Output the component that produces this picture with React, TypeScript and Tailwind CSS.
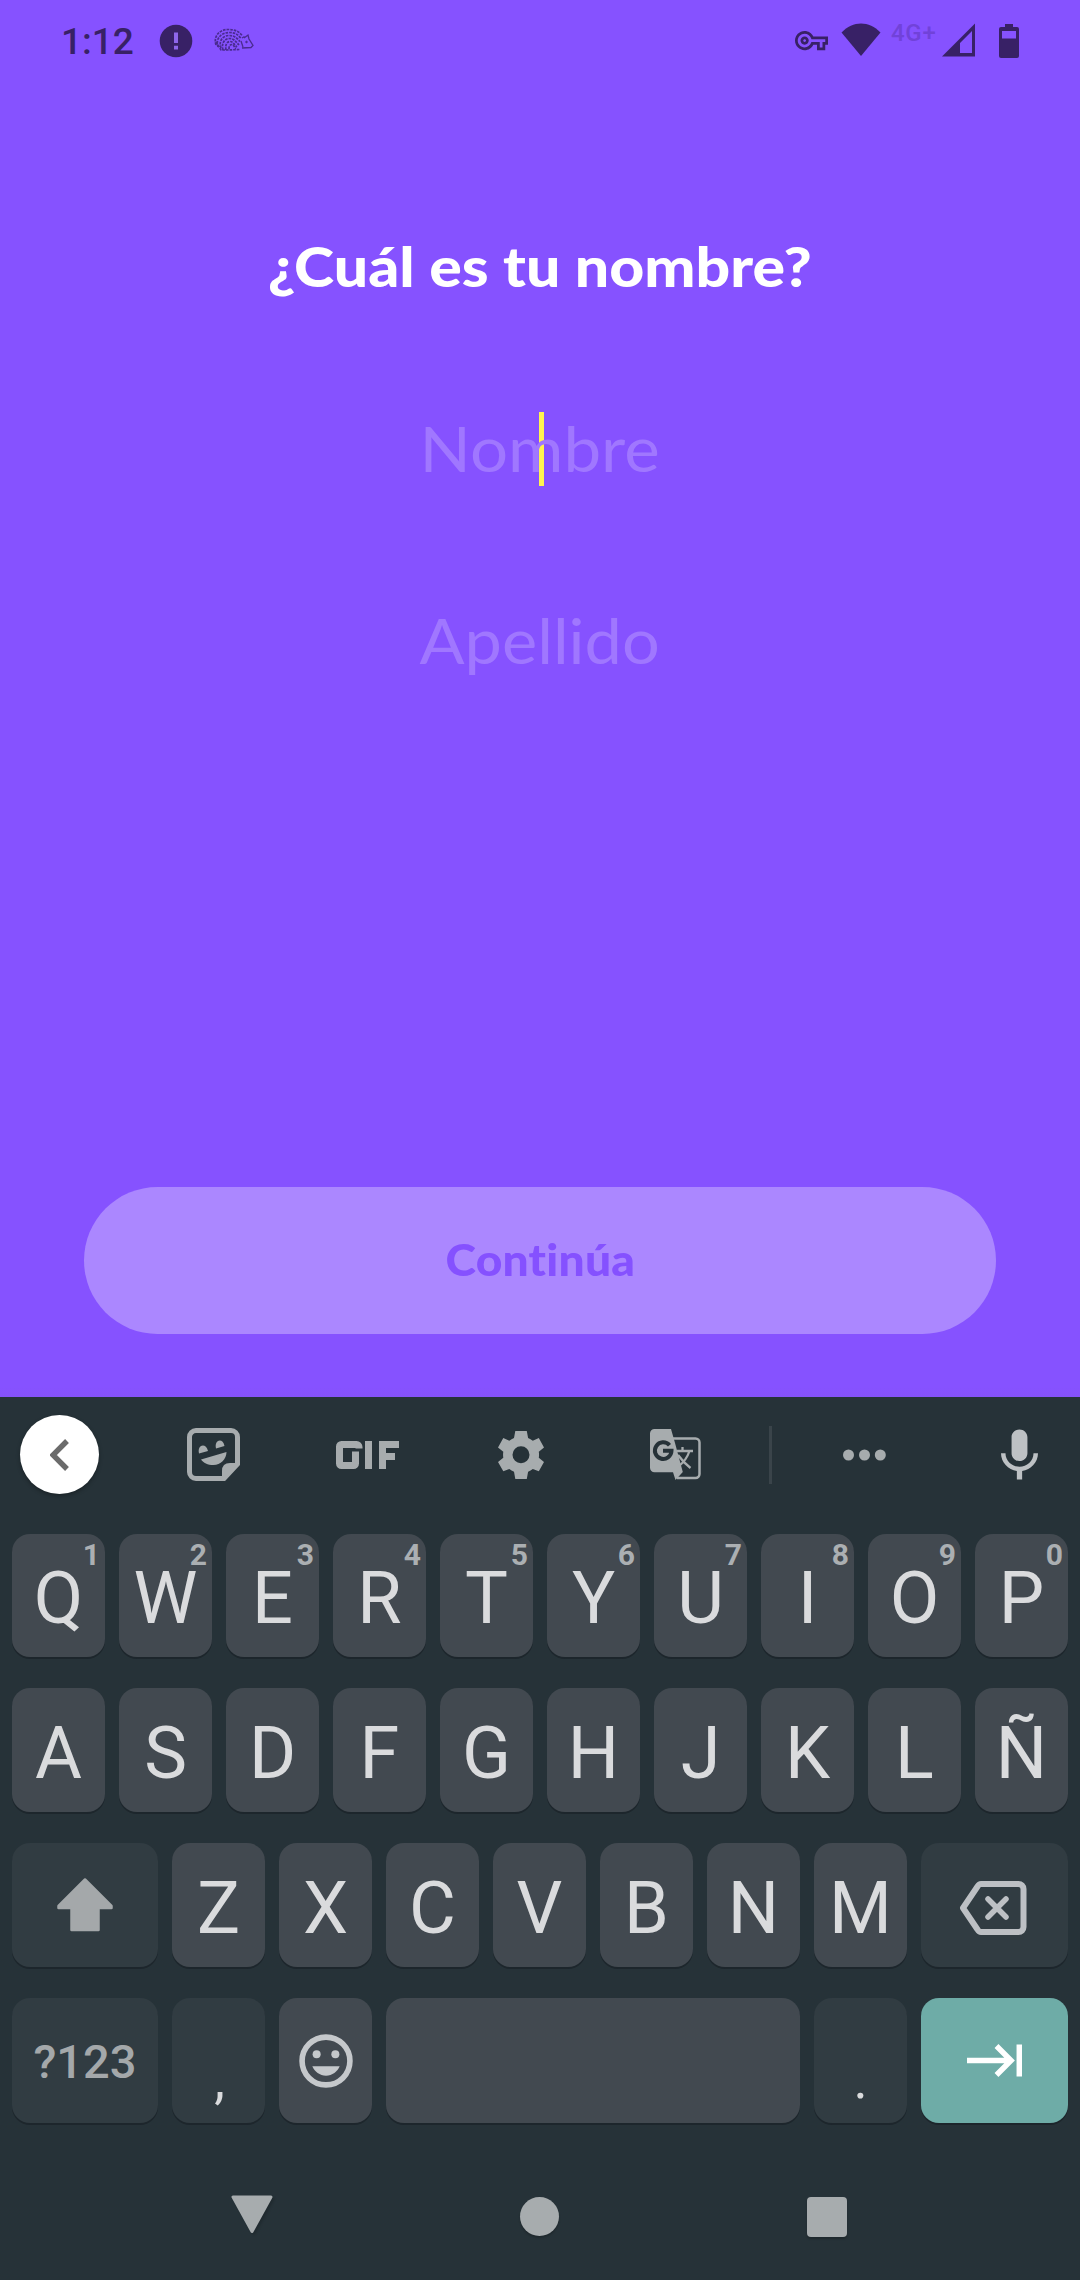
import React from "react";
import { MdOutlineVpnKey } from "react-icons/md";

const Hedgehog = () => (
  <svg width="40" height="26" viewBox="0 0 40 26" fill="none" stroke="#4a2b90">
    <g strokeWidth="1.700" strokeDasharray="2.600 1">
      <path d="M2 17C-1 8 6 1.500 14 1.500c7 0 11 2 14 6" />
      <path d="M4 19C1 10 8 4.500 15 4.500c6 0 9 2 12 6" />
      <path d="M7 20C4 12 10 7.500 15 7.500c6 0 8 3 11 6" />
      <path d="M9 22c-2-7 2-11.500 6.500-11.500s6 3 9.500 6.500" />
      <path d="M12 22c-1-5 1-8.500 4-8.500s4 3 7 5.500" />
      <path d="M15 21c0-3 1-4.500 3-4.500s2 3 4 4" />
      <path d="M2 14l5 8h5l14-.5" />
    </g>
    <path strokeWidth="1.300" d="M28 10l2.500-1.500M30 10l4-3 1 4 4 6.500-2 2-9 .5M27 13l2 6" />
    <circle cx="32.500" cy="14" r=".8" fill="#4a2b90" />
  </svg>
);

const StatusBar = () => (
  <div className="flex h-[80px] shrink-0 items-center justify-between pl-[61px] pr-[61px] text-[#382166]">
    <div className="flex items-center">
      <span className="w-[98px] pt-[4px] text-[37px] font-medium leading-[80px]">1:12</span>
      <svg width="34" height="34" viewBox="0 0 34 34" className="mt-px">
        <circle cx="17" cy="17" r="16.300" fill="#382166" />
        <path d="M15 8.500h4v10.500h-4zM15 21.800h4v3.700h-4z" fill="#8e66ea" />
      </svg>
      <div className="ml-[21px] mt-px">
        <Hedgehog />
      </div>
    </div>
    <div className="flex items-center">
      <MdOutlineVpnKey size={33} className="mt-px" />
      <svg width="40" height="34" viewBox="0 0 40 34" className="ml-[13px]">
        <path d="M.5 9.500C12-2.500 28-2.500 39.500 9.500L20 33z" fill="currentColor" />
      </svg>
      <span className="-mt-[15px] ml-[10px] w-[51px] text-[24px] font-medium leading-[24px] tracking-[0.7px] text-[#7142d9]">4G+</span>
      <svg width="33" height="34" viewBox="0 0 33 34">
        <path fillRule="evenodd" d="M33 .5V33.500H0zM30 8L18 20v10h12z" fill="currentColor" />
      </svg>
      <svg width="20" height="34" viewBox="0 0 20 34" className="ml-[24px] mt-px">
        <path fillRule="evenodd" d="M6 0h8v3h4a2 2 0 0 1 2 2v27a2 2 0 0 1-2 2H2a2 2 0 0 1-2-2V5a2 2 0 0 1 2-2h4zM3 7v7.500h14V7z" fill="currentColor" />
      </svg>
    </div>
  </div>
);

const Toolbar = () => (
  <div className="flex h-[115px] items-center pl-[20px] text-[#a7acae]">
    <div className="flex size-[79px] items-center justify-center rounded-full bg-white shadow-[0_2px_4px_rgba(0,0,0,0.3)]">
      <svg width="20" height="32" viewBox="0 0 20 32">
        <path d="M17 2L3 16l14 14" fill="none" stroke="#6b6b6b" strokeWidth="5.400" />
      </svg>
    </div>
    <svg width="53" height="53" viewBox="0 0 53 53" className="ml-[88px]">
      <path d="M37 50.500H9a6.500 6.500 0 0 1-6.500-6.500V9A6.500 6.500 0 0 1 9 2.500h35A6.500 6.500 0 0 1 50.500 9v27z" fill="none" stroke="currentColor" strokeWidth="5" />
      <path d="M35 52V43q0-8 8-8h9v2L37.500 52z" fill="currentColor" />
      <path d="M14 31.500L39.500 24c0 7-6 13-13 13-6 0-10-2-12.500-5.500zM12 25.500c-2-9 7-11 9-2.500zM29 20.500c-2-9 7-11 8.500-2.500z" fill="currentColor" />
    </svg>
    <svg width="63" height="28" viewBox="0 0 63 28" className="ml-[96px]" fill="none" stroke="currentColor" strokeWidth="7">
      <path d="M23 7.500V6a2.500 2.500 0 0 0-2.500-2.500h-15A2 2 0 0 0 3.500 5.500v17a2 2 0 0 0 2 2h12a2 2 0 0 0 2-2V14H16M32.500 0v28M46.500 28V0M43 3.500h20M45 15.500h14" />
    </svg>
    <svg width="46" height="48" viewBox="0 0 46 48" className="ml-[99px]">
      <path
        fillRule="evenodd"
        d="M17.300 0h11.500l1.300 7q2.500 1 4.700 2.700l6-2.700L46 16.500l-5.200 4.300q.5 3 0 6L46 31l-5.200 9.300-6-2.300q-2.200 1.700-4.700 2.700l-1.300 7.300H17.300L16 40.700q-2.500-1-4.700-2.700l-6 2.300L0 31l5.300-4.200q-.5-3 0-6L0 16.500 5.300 7l6 2.700Q13.500 8 16 7zM23 15.300a8.500 8.500 0 1 0 0 17 8.500 8.500 0 0 0 0-17z"
        fill="currentColor"
      />
    </svg>
    <svg width="51" height="51" viewBox="0 0 51 51" className="ml-[106px]" fill="none">
      <path d="M23 9.500h22.500a4 4 0 0 1 4 4V45a4 4 0 0 1-4 4H27" stroke="currentColor" strokeWidth="2.500" />
      <path d="M27 22h16M32.500 18v4M39.500 22q-3 9-10.500 15M28 26q5 7 12.500 13" stroke="currentColor" strokeWidth="2.300" />
      <path d="M4.500 0H21l4 14 7.800 29L25.500 51 23 43.300H4.500A4.500 4.500 0 0 1 0 38.800V4.500A4.500 4.500 0 0 1 4.500 0z" fill="currentColor" />
      <path d="M19.500 16.200A8.300 8.300 0 1 0 21.500 21.800H13" stroke="#263238" strokeWidth="4" />
    </svg>
    <div className="ml-[68px] h-[58px] w-[3px] bg-[#3a444a]" />
    <svg width="43" height="12" viewBox="0 0 43 12" className="ml-[71px]" fill="currentColor">
      <circle cx="5.500" cy="6" r="5.500" />
      <circle cx="21.500" cy="6" r="5.500" />
      <circle cx="37.300" cy="6" r="5.500" />
    </svg>
    <svg width="37" height="51" viewBox="5 2 14 19" className="ml-[115px] text-[#bdc1c4]">
      <path
        fill="currentColor"
        d="M12 14c1.660 0 3-1.340 3-3V5c0-1.660-1.340-3-3-3S9 3.340 9 5v6c0 1.660 1.340 3 3 3zm5.300-3c0 3-2.540 5.100-5.300 5.100S6.700 14 6.700 11H5c0 3.410 2.720 6.230 6 6.720V21h2v-3.280c3.280-.48 6-3.300 6-6.720h-1.700z"
      />
    </svg>
  </div>
);

const KEY = "relative flex shrink-0 items-center justify-center rounded-[18px] shadow-[0_2px_0_#1d262c]";
const LETTER = "w-[93px] bg-[#424950] pt-[7px] text-[72px] leading-[80px] text-[#dadbdd]";
const DARK = "bg-[#313c42]";

const LetterKey = ({ label, hint }: { label: string; hint?: string }) => (
  <div className={`${KEY} ${LETTER}`}>
    {label}
    {hint && <span className="absolute right-[5px] top-[6px] text-[30px] font-bold leading-[30px] text-[#abafb2]">{hint}</span>}
  </div>
);

const Keyboard = () => (
  <div className="h-[883px] bg-[#263238]">
    <Toolbar />
    <div className="flex flex-col gap-[31px] px-[12px] pt-[22px]">
      <div className="flex h-[123px] gap-[14px]">
        {"QWERTYUIOP".split("").map((c, i) => (
          <LetterKey key={c} label={c} hint={String((i + 1) % 10)} />
        ))}
      </div>
      <div className="flex h-[124px] gap-[14px]">
        {"ASDFGHJKLÑ".split("").map((c) => (
          <LetterKey key={c} label={c} />
        ))}
      </div>
      <div className="flex h-[124px] gap-[14px]">
        <div className={`${KEY} ${DARK} w-[146px]`}>
          <svg width="56" height="54" viewBox="0 0 56 54">
            <path d="M28 1.500L54.500 28v2H41.500v22H14.500V30H1.500v-2z" fill="#a4a8aa" stroke="#a4a8aa" strokeWidth="2.500" strokeLinejoin="round" />
          </svg>
        </div>
        {"ZXCVBNM".split("").map((c) => (
          <LetterKey key={c} label={c} />
        ))}
        <div className={`${KEY} ${DARK} w-[147px]`}>
          <svg width="68" height="54" viewBox="0 0 68 54" className="-ml-[4px] mt-[6px]" fill="none" stroke="#bdc0c4" strokeWidth="6" strokeLinejoin="round" strokeLinecap="round">
            <path d="M22 3h37.500a5 5 0 0 1 5 5v38a5 5 0 0 1-5 5H22q-2 0-3.500-2.500L4 27 18.500 5.500Q20 3 22 3z" />
            <path d="M29 18l18 18M47 18L29 36" strokeWidth="5.500" />
          </svg>
        </div>
      </div>
      <div className="flex h-[125px] gap-[14px]">
        <div className={`${KEY} ${DARK} w-[146px] pt-[4px] text-[47px] font-medium text-[#a4a8aa]`}>?123</div>
        <div className={`${KEY} ${DARK} w-[93px] pl-[2px] pt-[38px] text-[54px] leading-[60px] text-[#dadbdd]`}>,</div>
        <div className={`${KEY} w-[93px] bg-[#424950]`}>
          <svg width="54" height="54" viewBox="1.900 1.900 20.200 20.200" fill="#c5c8cb">
            <circle cx="12" cy="12" r="8.950" fill="none" stroke="#c5c8cb" strokeWidth="2.100" />
            <circle cx="8.500" cy="9.500" r="1.500" />
            <circle cx="15.500" cy="9.500" r="1.500" />
            <path d="M12 17.500c2.330 0 4.310-1.460 5.110-3.500H6.890c.8 2.040 2.780 3.500 5.110 3.500z" />
          </svg>
        </div>
        <div className={`${KEY} w-[414px] bg-[#424950]`} />
        <div className={`${KEY} ${DARK} w-[93px] pt-[38px] text-[54px] leading-[60px] text-[#dadbdd]`}>.</div>
        <div className={`${KEY} w-[147px] bg-[#6eaca7]`}>
          <svg width="55" height="33" viewBox="0 0 55 33" fill="none" stroke="white" strokeWidth="5.500">
            <path d="M0 16.500h44M29.500 2L44 16.500 29.500 31M52.300 .5v32" />
          </svg>
        </div>
      </div>
    </div>
    <div className="mt-[71px] flex items-start justify-between pl-[230px] pr-[233px]">
      <svg width="43" height="42" viewBox="0 0 43 42" className="overflow-visible drop-shadow-[2px_2px_1px_rgba(0,0,0,0.15)]">
        <path d="M3 3h38L22 37.500z" fill="#a7acae" stroke="#a7acae" strokeWidth="3" strokeLinejoin="round" />
      </svg>
      <div className="-ml-px mt-[3px] size-[39px] rounded-full bg-[#a7acae] shadow-[0_2px_2px_rgba(0,0,0,0.2)]" />
      <div className="mt-[3px] size-[40px] rounded-[4px] bg-[#a7acae] shadow-[0_2px_2px_rgba(0,0,0,0.2)]" />
    </div>
  </div>
);

export default function App() {
  return (
    <div className="flex h-[2280px] w-[1080px] flex-col overflow-hidden bg-[#8652ff] font-['Roboto',sans-serif]">
      <StatusBar />
      <main className="flex h-[1317px] shrink-0 flex-col items-center bg-[linear-gradient(to_bottom,transparent_1307px,#804edf33_1317px)] font-['Lato',sans-serif]">
        <h1 className="mt-[156px] scale-x-[1.085] whitespace-nowrap text-[56px] font-black leading-[60px] text-white">¿Cuál es tu nombre?</h1>
        <div className="relative mt-[116px] flex h-[74px] w-[912px] justify-center">
          <div className="absolute left-[455px] top-0 h-[74px] w-[5px] bg-[#fff350]" />
          <span className="relative scale-x-[1.085] whitespace-nowrap text-[62px] leading-[73px] text-[#a077ff]">Nombre</span>
        </div>
        <div className="mt-[118px] h-[74px] scale-x-[1.075] whitespace-nowrap text-[62px] leading-[73px] text-[#a077ff]">Apellido</div>
        <button className="mt-[509px] flex h-[147px] w-[912px] items-center justify-center rounded-full bg-[#ab87ff] pb-[3px] text-[44px] font-black tracking-[0.200px] text-[#8551ff]">
          <span className="scale-x-[1.050]">Continúa</span>
        </button>
      </main>
      <Keyboard />
    </div>
  );
}
